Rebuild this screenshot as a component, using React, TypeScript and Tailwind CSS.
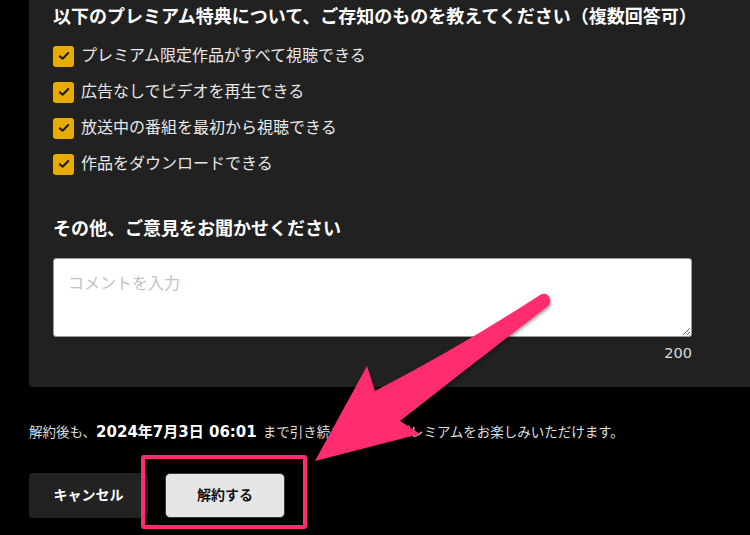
import React from "react";

const items = [
  "プレミアム限定作品がすべて視聴できる",
  "広告なしでビデオを再生できる",
  "放送中の番組を最初から視聴できる",
  "作品をダウンロードできる",
];

function Check() {
  return (
    <span className="flex h-[21px] w-[21px] shrink-0 items-center justify-center rounded-[3px] bg-[#e6ad00] ring-1 ring-[#2a2200]">
      <svg width="12" height="10" viewBox="0 0 12 10" fill="none">
        <path d="M1.8 5.2 L4.6 7.8 L10.2 2" stroke="#1c1c1c" strokeWidth="2" strokeLinecap="round" strokeLinejoin="round" />
      </svg>
    </span>
  );
}

export default function App() {
  return (
    <div
      className="relative h-[535px] w-[750px] overflow-hidden bg-black"
      style={{ fontFamily: '"Liberation Sans", "Noto Sans CJK JP", sans-serif' }}
    >
      <div className="ml-[29px] w-[740px] rounded-b-[4px] bg-[#212121] pb-[24px] pl-[24px] pt-[4px]">
        <div className="w-[639px]">
          <h2 className="text-[18px] font-bold leading-[26px] text-white whitespace-nowrap">
            以下のプレミアム特典について、ご存知のものを教えてください（複数回答可）
          </h2>
          <ul className="mt-[14px] flex flex-col gap-[12px]">
            {items.map((t) => (
              <li key={t} className="flex h-[24px] items-center gap-[7px]">
                <Check />
                <span className="text-[16px] leading-[24px] text-[#e8e8e8]">{t}</span>
              </li>
            ))}
          </ul>
          <h2 className="mt-[40px] text-[18px] font-bold leading-[26px] text-white">
            その他、ご意見をお聞かせください
          </h2>
          <textarea
            className="mt-[16px] block h-[79px] w-full rounded-[3px] border border-[#9a9a9a] bg-white px-[14px] pt-[13px] text-[16px] leading-[24px] text-black placeholder:text-[#c2c2c2] outline-none"
            placeholder="コメントを入力"
          />
          <div
            className="mt-[6px] text-right text-[14.5px] leading-[20px] text-[#dcdcdc]"
            style={{ fontFamily: '"DejaVu Sans", sans-serif' }}
          >
            200
          </div>
        </div>
      </div>

      <p className="ml-[29px] mt-[35px] whitespace-nowrap text-[13.5px] leading-[20px] text-[#dedede]">
        解約後も、
        <span
          className="text-[15px] font-bold text-white"
          style={{ fontFamily: '"DejaVu Sans", "Noto Sans CJK JP", sans-serif' }}
        >
          2024年7月3日 06:01
        </span>
        <span className="inline-block w-[6px]" />
        まで引き続き
        <span className="tracking-[1px]" style={{ fontFamily: '"DejaVu Sans", sans-serif' }}>ABEMA</span>
        プレミアムをお楽しみいただけます。
      </p>

      <div className="ml-[29px] mt-[30px] flex gap-[17px]">
        <button className="flex h-[45px] w-[119px] items-center justify-center rounded-[4px] bg-[#222222] text-[14px] font-bold text-white">
          キャンセル
        </button>
        <button className="flex h-[45px] w-[120px] items-center justify-center rounded-[5px] border border-[#3a3a3a] bg-[#e6e6e6] text-[14px] font-bold text-[#111]">
          解約する
        </button>
      </div>

      <div className="pointer-events-none absolute left-[141px] top-[455px] h-[74px] w-[166px] rounded-[3px] border-[4px] border-[#ff2d6e]" />

      <svg
        className="pointer-events-none absolute left-0 top-0"
        width="750"
        height="535"
        viewBox="0 0 750 535"
        style={{ filter: "drop-shadow(1px 2px 1.5px rgba(0,0,0,0.35))" }}
      >
        <path
          d="M315 461 L367 366 L375 391 Q462 346 540 295 Q547 291 550 299 Q551 304 547 307 Q475 362 400 421 L420 434 Z"
          fill="#ff2d6e"
        />
      </svg>
    </div>
  );
}
